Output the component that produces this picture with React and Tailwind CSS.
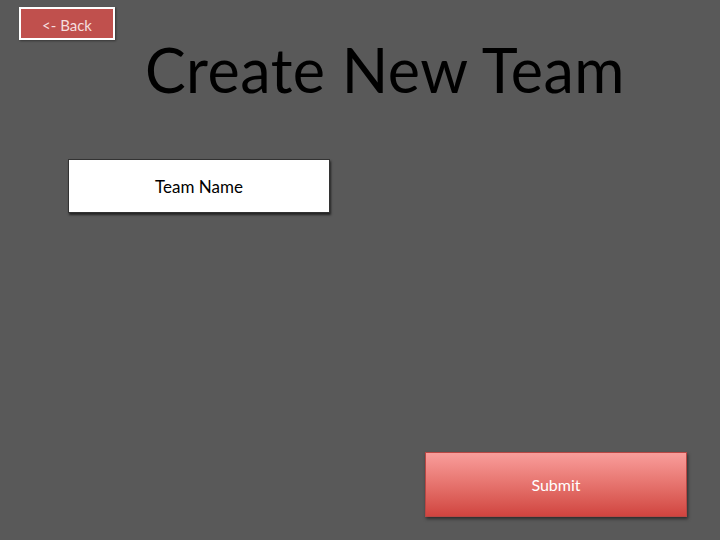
import React from "react";

const App = () => {
  return (
    <div className="flex flex-col w-[720px] h-[540px] bg-[#595959] overflow-hidden font-['Lato',sans-serif]">
      {/* header row: back button + title */}
      <div className="flex items-start pl-[19px] pt-[7px]">
        <button className="w-[96px] h-[33px] pt-[3px] border-[2px] border-white bg-[#c0504d] text-[15px] text-[#f5dede] leading-none shadow-[1px_1px_2px_rgba(0,0,0,0.4)]">
          &lt;- Back
        </button>
        <h1 className="ml-[30px] mt-[32px] text-[61px] leading-none text-black tracking-[0.5px]">
          Create New Team
        </h1>
      </div>

      {/* team name field */}
      <div className="pl-[68px] mt-[59px]">
        <div className="flex items-center justify-center w-[262px] h-[54px] pt-[2px] bg-white border border-[#333] shadow-[1px_2px_2px_rgba(0,0,0,0.6)] text-[17px] text-black">
          Team Name
        </div>
      </div>

      {/* submit */}
      <div className="flex justify-end pr-[33px] mt-auto mb-[23px]">
        <button className="w-[262px] h-[65px] bg-gradient-to-b from-[#f99d9b] to-[#d0443f] border border-[#b84744] shadow-[1px_2px_3px_rgba(0,0,0,0.5)] text-[16px] text-white">
          Submit
        </button>
      </div>
    </div>
  );
};

export default App;
